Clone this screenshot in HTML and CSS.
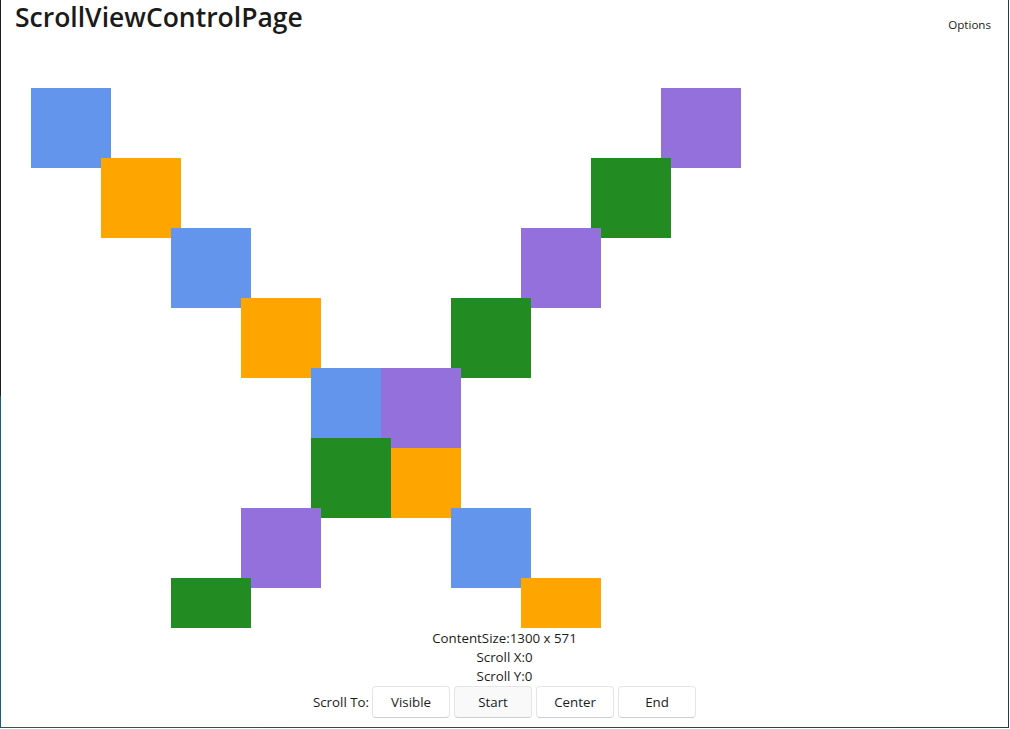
FILE: index.html
```html
<!DOCTYPE html>
<html>
<head>
<meta charset="utf-8">
<link rel="stylesheet" href="styles.css">
</head>
<body>
<div class="frame">
  <div class="window">
    <header class="header">
      <h1 class="title">ScrollViewControlPage</h1>
      <span class="options">Options</span>
    </header>
    <div class="scroller">
      <div class="canvas">
        <div class="sq blue" style="left:30px;top:30px"></div>
        <div class="sq orange" style="left:100px;top:100px"></div>
        <div class="sq blue" style="left:170px;top:170px"></div>
        <div class="sq orange" style="left:240px;top:240px"></div>
        <div class="sq blue" style="left:310px;top:310px"></div>
        <div class="sq orange" style="left:380px;top:380px"></div>
        <div class="sq blue" style="left:450px;top:450px"></div>
        <div class="sq orange" style="left:520px;top:520px"></div>
        <div class="sq purple" style="left:660px;top:30px"></div>
        <div class="sq green" style="left:590px;top:100px"></div>
        <div class="sq purple" style="left:520px;top:170px"></div>
        <div class="sq green" style="left:450px;top:240px"></div>
        <div class="sq purple" style="left:380px;top:310px"></div>
        <div class="sq green" style="left:310px;top:380px"></div>
        <div class="sq purple" style="left:240px;top:450px"></div>
        <div class="sq green" style="left:170px;top:520px"></div>
      </div>
    </div>
    <div class="info">
      <div class="line">ContentSize:1300 x 571</div>
      <div class="line">Scroll X:0</div>
      <div class="line">Scroll Y:0</div>
      <div class="actions">
        <span class="label">Scroll To:</span>
        <button class="btn">Visible</button>
        <button class="btn hover">Start</button>
        <button class="btn">Center</button>
        <button class="btn">End</button>
      </div>
    </div>
  </div>
</div>
</body>
</html>
```

FILE: styles.css
```css
html, body {
  margin: 0;
  padding: 0;
  background: #ffffff;
}

body {
  width: 1010px;
  height: 729px;
  overflow: hidden;
  font-family: "Open Sans", "Noto Sans", sans-serif;
  color: #1b1b1b;
}

.frame {
  width: 1009px;
  height: 728px;
  box-sizing: border-box;
  padding: 0 1px 1px 1px;
  background:
    linear-gradient(to right, #175d74 0%, #1d3c60 100%) bottom / 100% 1px no-repeat,
    linear-gradient(to bottom, #1e1e1e 0, #1e1e1e 396px, #175e77 396px, #175e77 100%) left / 1px 100% no-repeat,
    linear-gradient(#1f3a60, #1f3a60) right / 1px 100% no-repeat;
}

.window {
  background: #ffffff;
  height: 100%;
  display: flex;
  flex-direction: column;
}

.header {
  height: 58px;
  flex: none;
  display: flex;
  justify-content: space-between;
  align-items: flex-start;
  padding: 0 17px 0 14px;
}

.title {
  margin: 0;
  font-size: 26.5px;
  font-weight: 600;
  line-height: 34px;
  letter-spacing: 0;
}

.options {
  font-size: 11.6px;
  line-height: 16px;
  margin-top: 17px;
}

.scroller {
  height: 570px;
  flex: none;
  overflow: hidden;
  position: relative;
}

.canvas {
  position: relative;
  width: 1300px;
  height: 571px;
}

.sq {
  position: absolute;
  width: 80px;
  height: 80px;
}

.blue { background: #6495ed; }
.orange { background: #ffa500; }
.purple { background: #9370db; }
.green { background: #228b22; }

.info {
  display: flex;
  flex-direction: column;
  align-items: center;
  font-size: 13.3px;
  padding-top: 1px;
}

.line {
  line-height: 19px;
  height: 19px;
}

.actions {
  display: flex;
  align-items: center;
  gap: 4px;
  height: 32px;
}

.label {
  margin-right: -1px;
}

.btn {
  font-family: inherit;
  font-size: 13.3px;
  color: #1b1b1b;
  width: 78px;
  height: 32px;
  background: #ffffff;
  border: 1px solid #e5e5e5;
  border-bottom-color: #cfcfcf;
  border-radius: 4px;
  padding: 0;
}

.btn.hover {
  background: #f9f9f9;
}
```
